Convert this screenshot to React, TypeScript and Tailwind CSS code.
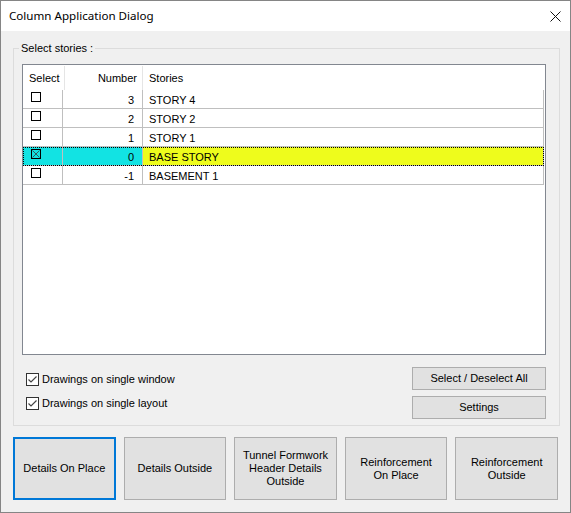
import React from "react";

const stories = [
  { num: 3, name: "STORY 4", checked: false, active: false },
  { num: 2, name: "STORY 2", checked: false, active: false },
  { num: 1, name: "STORY 1", checked: false, active: false },
  { num: 0, name: "BASE STORY", checked: true, active: true },
  { num: -1, name: "BASEMENT 1", checked: false, active: false },
];

const actions = [
  { label: ["Details On Place"], focused: true },
  { label: ["Details Outside"] },
  { label: ["Tunnel Formwork", "Header Details", "Outside"] },
  { label: ["Reinforcement", "On Place"] },
  { label: ["Reinforcement", "Outside"] },
];

function GridBox({ checked }: { checked: boolean }) {
  return (
    <span className="mt-[2px] ml-[8px] block h-[10px] w-[10px] border border-black">
      {checked && (
        <svg width="8" height="8" viewBox="0 0 8 8" className="block">
          <path d="M0.5 0.5 L7.5 7.5 M7.5 0.5 L0.5 7.5" stroke="#2f5f5f" strokeWidth="1" />
        </svg>
      )}
    </span>
  );
}

function CheckOption({ label }: { label: string }) {
  return (
    <label className="flex h-[13px] items-center gap-[3px]">
      <span className="flex h-[13px] w-[13px] items-center justify-center border border-[#333] bg-white">
        <svg width="11" height="11" viewBox="0 0 11 11">
          <path d="M1.5 5.5 L4 8 L9.5 2.5" fill="none" stroke="#444" strokeWidth="1.2" />
        </svg>
      </span>
      <span>{label}</span>
    </label>
  );
}

export default function App() {
  return (
    <div
      className="flex h-[513px] w-[571px] flex-col border border-[#858585] bg-[#f0f0f0] text-[11px] text-black"
      style={{ fontFamily: '"Liberation Sans", Arial, sans-serif' }}
    >
      <div className="flex h-[30px] shrink-0 items-center justify-between bg-white pl-[8px] pr-[9px]">
        <span className="text-[11.6px]" style={{ fontFamily: '"Noto Sans", sans-serif' }}>
          Column Application Dialog
        </span>
        <svg width="11" height="11" viewBox="0 0 11 11">
          <path d="M0.5 0.5 L10.5 10.5 M10.5 0.5 L0.5 10.5" stroke="#111" strokeWidth="1" />
        </svg>
      </div>

      <div className="flex flex-1 flex-col px-[12px] pt-[17px]">
        <div className="relative h-[378px] w-[547px] border border-[#dcdcdc] px-[8px] pt-[15px]">
          <span className="absolute top-[-9px] left-[5px] bg-[#f0f0f0] px-[2px] leading-[16px]">
            Select stories :
          </span>

          <div className="h-[291px] w-[524px] border border-[#828790] bg-white">
            <div className="flex h-[25px] items-center pt-[1px] leading-none">
              <div className="flex h-full w-[42px] items-center border-r border-[#e5e5e5] pl-[6px]">Select</div>
              <div className="flex h-full w-[78px] items-center justify-end border-r border-[#e5e5e5] pr-[5px]">
                Number
              </div>
              <div className="pl-[6px]">Stories</div>
            </div>
            {stories.map((s) => (
              <div
                key={s.num}
                className={`flex h-[19px] w-[521px] border-r border-b border-[#bfbfbf] leading-[20px] ${
                  s.active ? "outline-1 -outline-offset-1 outline-black outline-dotted" : ""
                }`}
              >
                <div className={`w-[40px] border-r border-[#bfbfbf] ${s.active ? "border-[#12e3e3] bg-[#12e3e3]" : ""}`}>
                  <GridBox checked={s.checked} />
                </div>
                <div
                  className={`w-[80px] border-r border-[#bfbfbf] pr-[8px] text-right ${
                    s.active ? "border-[#12e3e3] bg-[#12e3e3]" : ""
                  }`}
                >
                  {s.num}
                </div>
                <div className={`flex-1 pl-[6px] ${s.active ? "bg-[#eefc1c]" : ""}`}>{s.name}</div>
              </div>
            ))}
          </div>

          <div className="mt-[12px] flex w-[524px] justify-between">
            <div className="flex flex-col gap-[11px] pt-[6px] pl-[4px]">
              <CheckOption label="Drawings on single window" />
              <CheckOption label="Drawings on single layout" />
            </div>
            <div className="flex flex-col gap-[6px]">
              <button className="h-[23px] w-[134px] border border-[#adadad] bg-[#e1e1e1]">Select / Deselect All</button>
              <button className="h-[23px] w-[134px] border border-[#adadad] bg-[#e1e1e1]">Settings</button>
            </div>
          </div>
        </div>

        <div className="mt-[11px] flex gap-[8px]">
          {actions.map((a) => (
            <button
              key={a.label.join(" ")}
              className={`flex h-[63px] w-[103px] flex-col items-center justify-center bg-[#e1e1e1] leading-[13px] ${
                a.focused ? "border-2 border-[#0078d7]" : "border border-[#adadad]"
              }`}
            >
              {a.label.map((l) => (
                <span key={l}>{l}</span>
              ))}
            </button>
          ))}
        </div>
      </div>
    </div>
  );
}
